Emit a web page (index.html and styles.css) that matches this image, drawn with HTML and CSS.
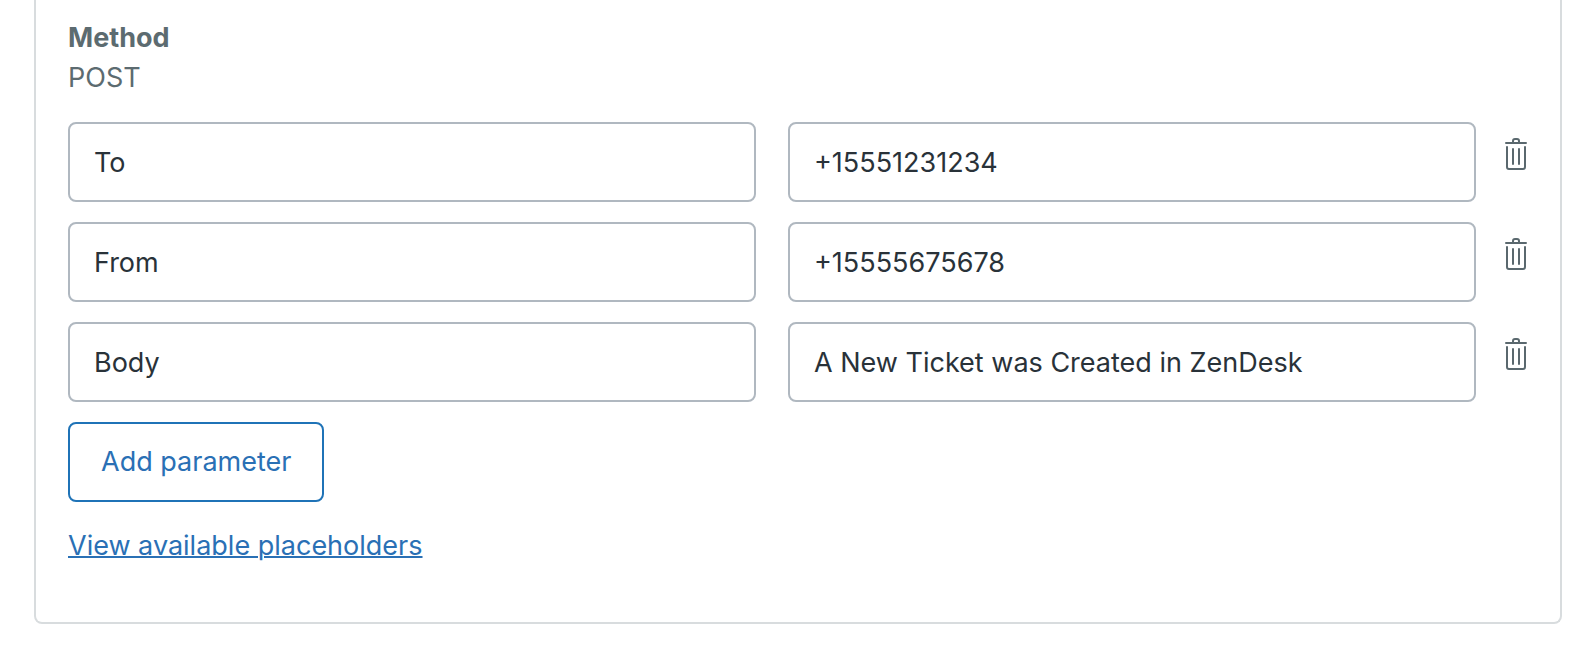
FILE: index.html
```html
<!DOCTYPE html>
<html lang="en">
<head>
<meta charset="utf-8">
<meta name="viewport" content="width=device-width, initial-scale=1">
<title>Parameters</title>
<link rel="stylesheet" href="styles.css">
</head>
<body>
<svg class="sprite" aria-hidden="true">
  <symbol id="trash" viewBox="0 0 32 32">
    <path d="M6 5h20M13 5V3q0-2 2-2h2q2 0 2 2v2M7 9v20q0 2 2 2h14q2 0 2-2V9M13 11v15M19 11v15" fill="none" stroke="currentColor" stroke-width="2" stroke-linecap="round"/>
  </symbol>
</svg>
<main class="card">
  <dl class="method">
    <dt class="method-label">Method</dt>
    <dd class="method-value">POST</dd>
  </dl>
  <form class="params">
    <div class="row">
      <input class="field" type="text" aria-label="Parameter 1 name" value="To">
      <input class="field" type="text" aria-label="Parameter 1 value" value="+15551231234">
      <button class="remove" type="button" aria-label="Remove parameter 1"><svg class="icon"><use href="#trash"/></svg></button>
    </div>
    <div class="row">
      <input class="field" type="text" aria-label="Parameter 2 name" value="From">
      <input class="field" type="text" aria-label="Parameter 2 value" value="+15555675678">
      <button class="remove" type="button" aria-label="Remove parameter 2"><svg class="icon"><use href="#trash"/></svg></button>
    </div>
    <div class="row">
      <input class="field" type="text" aria-label="Parameter 3 name" value="Body">
      <input class="field" type="text" aria-label="Parameter 3 value" value="A New Ticket was Created in ZenDesk">
      <button class="remove" type="button" aria-label="Remove parameter 3"><svg class="icon"><use href="#trash"/></svg></button>
    </div>
    <button class="add" type="button">Add parameter</button>
  </form>
  <a class="link" href="#placeholders">View available placeholders</a>
</main>
</body>
</html>
```
FILE: styles.css
```css
* {
  box-sizing: border-box;
}

body {
  margin: 0;
  padding: 0 28px 24px 34px;
  background: #fff;
  color: #2f3941;
  font-family: Inter, "Liberation Sans", sans-serif;
  font-size: 27px;
  line-height: 40px;
}

.sprite {
  display: none;
}

.card {
  display: flex;
  flex-direction: column;
  align-items: flex-start;
  gap: 24px;
  padding: 18px 28px 56px 32px;
  border: 2px solid #d8dcde;
  border-top: 0;
  border-radius: 0 0 8px 8px;
}

.method {
  margin: 0;
  color: #5c6b70;
}

.method-label {
  font-weight: 700;
}

.method-value {
  margin: 0;
}

.params {
  display: flex;
  flex-direction: column;
  align-items: flex-start;
  gap: 20px;
  width: 100%;
}

.row {
  display: flex;
  gap: 32px;
  width: 100%;
}

.field {
  flex: 1;
  min-width: 0;
  height: 80px;
  padding: 0 24px;
  border: 2px solid #b0b8c0;
  border-radius: 8px;
  background: #fff;
  color: #293239;
  font: inherit;
}

.remove {
  align-self: flex-start;
  margin: 16px 0 0 -8px;
  padding: 0;
  border: 0;
  background: none;
  color: #5a686e;
}

.icon {
  display: block;
  width: 32px;
  height: 32px;
}

.add {
  height: 80px;
  padding: 0 31px;
  border: 2px solid #1f73b7;
  border-radius: 8px;
  background: #fff;
  color: #2a70b5;
  font: inherit;
}

.link {
  color: #2a70b5;
  text-decoration-thickness: 2px;
}
```
